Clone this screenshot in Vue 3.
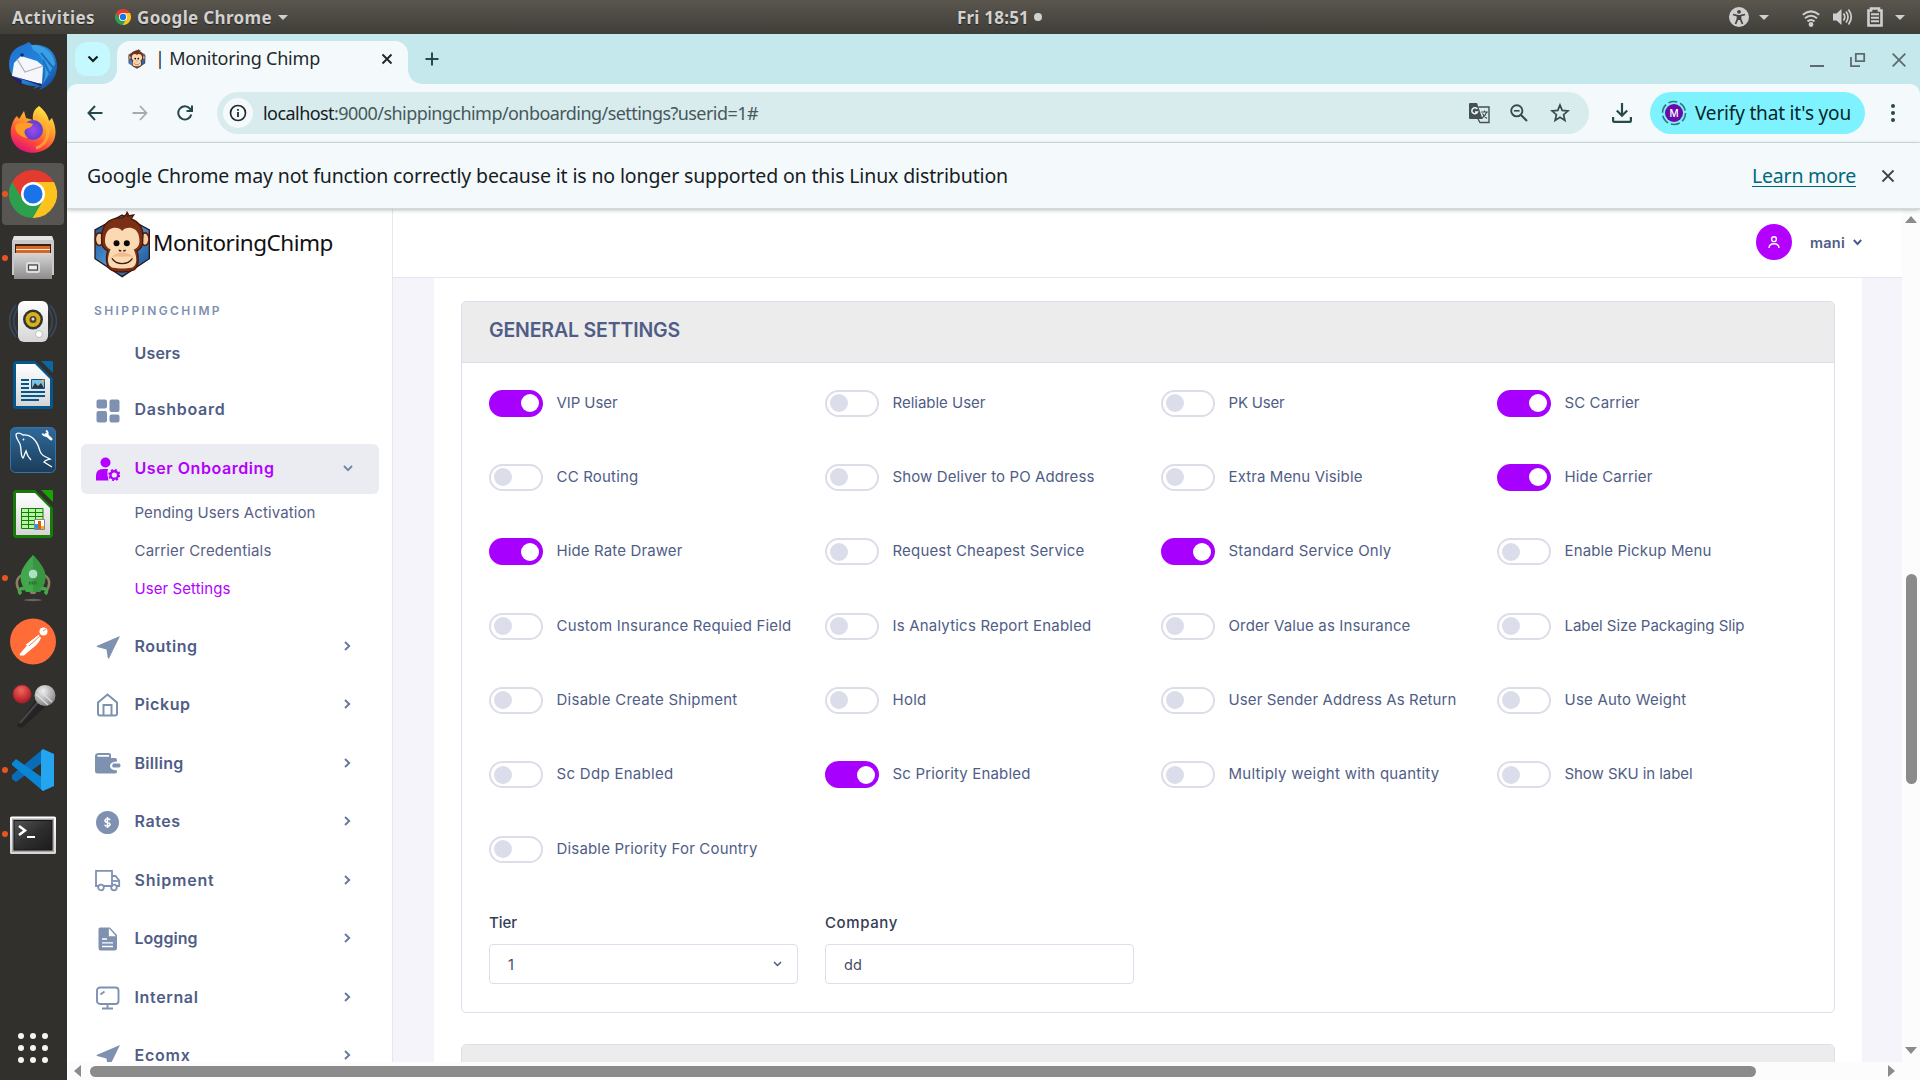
<script setup>
// Spreads a label's letters so that it takes the given width in pixels.
const vFit = {
  mounted(el, { value }) {
    const n = el.textContent.length
    if (!value || n < 2) return
    const box = el.getBoundingClientRect().width
    el.style.letterSpacing = ((value - box) / n).toFixed(3) + 'px'
  },
}

const launchers = [
  { id: 'mail' }, { id: 'firefox' }, { id: 'chrome', running: true, active: true },
  { id: 'files', running: true }, { id: 'music' }, { id: 'writer' }, { id: 'mysql' },
  { id: 'calc' }, { id: 'rocket', running: true }, { id: 'postman' }, { id: 'mic' },
  { id: 'code', running: true }, { id: 'terminal', running: true },
]

const subItems = [
  { name: 'Pending Users Activation', w: 181 },
  { name: 'Carrier Credentials', w: 137 },
  { name: 'User Settings', w: 96, current: true },
]

const menu = [
  { name: 'Routing', icon: 'nav', w: 63 },
  { name: 'Pickup', icon: 'home', w: 56 },
  { name: 'Billing', icon: 'wallet', w: 49 },
  { name: 'Rates', icon: 'dollar', w: 46 },
  { name: 'Shipment', icon: 'truck', w: 80 },
  { name: 'Logging', icon: 'file', w: 63 },
  { name: 'Internal', icon: 'monitor', w: 64 },
  { name: 'Ecomx', icon: 'nav', w: 56 },
]

const toggles = [
  ['VIP User', 61, true], ['Reliable User', 93], ['PK User', 56], ['SC Carrier', 75, true],
  ['CC Routing', 82], ['Show Deliver to PO Address', 202], ['Extra Menu Visible', 134], ['Hide Carrier', 88, true],
  ['Hide Rate Drawer', 126, true], ['Request Cheapest Service', 192], ['Standard Service Only', 163, true], ['Enable Pickup Menu', 147],
  ['Custom Insurance Requied Field', 235], ['Is Analytics Report Enabled', 199], ['Order Value as Insurance', 182], ['Label Size Packaging Slip', 180],
  ['Disable Create Shipment', 181], ['Hold', 34], ['User Sender Address As Return', 228], ['Use Auto Weight', 122],
  ['Sc Ddp Enabled', 117], ['Sc Priority Enabled', 138, true], ['Multiply weight with quantity', 211], ['Show SKU in label', 128],
  ['Disable Priority For Country', 201],
]
</script>

<template>
  <div class="desktop">
    <svg class="defs" width="0" height="0">
      <defs>
        <linearGradient id="gBlue" x1="0" y1="0" x2="1" y2="1"><stop offset="0" stop-color="#1f6fd0" /><stop offset=".55" stop-color="#2385dc" /><stop offset="1" stop-color="#153f96" /></linearGradient>
        <linearGradient id="gFox" x1=".8" y1="0" x2=".3" y2="1"><stop offset="0" stop-color="#fff14a" /><stop offset=".4" stop-color="#ffa02c" /><stop offset=".72" stop-color="#ff4a3b" /><stop offset="1" stop-color="#e0107c" /></linearGradient>
        <linearGradient id="gGrey" x1="0" y1="0" x2="0" y2="1"><stop offset="0" stop-color="#d6d6d6" /><stop offset="1" stop-color="#8d8d8d" /></linearGradient>
        <linearGradient id="gWhite" x1="0" y1="0" x2="0" y2="1"><stop offset="0" stop-color="#fff" /><stop offset="1" stop-color="#d5d5d5" /></linearGradient>
        <linearGradient id="gSql" x1="0" y1="0" x2="0" y2="1"><stop offset="0" stop-color="#2e6a9c" /><stop offset="1" stop-color="#1b3d58" /></linearGradient>
        <linearGradient id="gTerm" x1="0" y1="0" x2="1" y2="1"><stop offset="0" stop-color="#555" /><stop offset=".5" stop-color="#2e2e2e" /><stop offset="1" stop-color="#1c1c1c" /></linearGradient>
        <linearGradient id="gHex" x1="0" y1="0" x2="1" y2="1"><stop offset="0" stop-color="#154b8c" /><stop offset=".5" stop-color="#4a93d4" /><stop offset="1" stop-color="#154b8c" /></linearGradient>
        <radialGradient id="gRed" cx=".45" cy=".3" r=".7"><stop offset="0" stop-color="#f0675c" /><stop offset="1" stop-color="#b01524" /></radialGradient>
        <radialGradient id="gMic" cx=".4" cy=".3" r=".8"><stop offset="0" stop-color="#f1f1f1" /><stop offset="1" stop-color="#777" /></radialGradient>
        <radialGradient id="gPurple"><stop offset="0" stop-color="#a349ea" /><stop offset="1" stop-color="#5b3fd0" /></radialGradient>
      </defs>
      <symbol id="chrome-logo" viewBox="0 0 48 48">
        <path d="M24 24 3.200 12A24 24 0 0 1 44.800 12Z" fill="#e33b2e" />
        <path d="M24 24 44.800 12A24 24 0 0 1 24 48Z" fill="#fcc31e" />
        <path d="M24 24 24 48A24 24 0 0 1 3.200 12Z" fill="#2da04e" />
        <path d="M24 12H44.800A24 24 0 0 1 46 15L34 24Z" fill="#fcc31e" />
        <path d="M3.200 12 13.600 30 24 24 20 13Z" fill="#e33b2e" />
        <path d="M34.400 30 24 48 18 35Z" fill="#2da04e" />
        <path d="M34.400 30 24 48H26L38 30Z" fill="#fcc31e" />
        <circle cx="24" cy="24" r="12" fill="#fff" /><circle cx="24" cy="24" r="9.500" fill="#1a73e8" />
      </symbol>
      <symbol id="monkey" viewBox="10 16 172 202">
        <path d="M95 28 177 73V160L95 214 13 160V73Z" fill="url(#gHex)" stroke="#321412" stroke-width="4" />
        <ellipse cx="26" cy="101" rx="12" ry="19" fill="#f5cda4" stroke="#5a1d0c" stroke-width="5" />
        <ellipse cx="164" cy="101" rx="12" ry="19" fill="#f5cda4" stroke="#5a1d0c" stroke-width="5" />
        <path d="M95 36C99 32 108 31 110 20C114 25 114 29 112 31L130 28C126 34 124 36 122 40C148 50 161 72 157 102C158 122 153 128 140 137C146 156 145 186 130 194C112 202 78 202 62 194C46 186 45 156 51 137C38 128 32 122 33 102C30 72 44 46 72 39C80 36 88 36 95 36Z" fill="#7b3015" stroke="#4a1808" stroke-width="4" />
        <path d="M95 76C84 62 52 62 45 90C39 116 48 126 60 132C48 158 50 184 68 187C84 190 106 190 122 187C140 184 142 158 130 132C144 126 151 116 145 90C138 62 106 62 95 76Z" fill="#fbdab3" />
        <path d="M95 141C78 141 58 154 56 165C62 150 80 154 95 154S130 150 136 165C130 150 112 141 95 141Z" fill="#f3ba8d" />
        <circle cx="78" cy="113" r="9" fill="#0c0705" /><circle cx="109" cy="113" r="9" fill="#0c0705" />
        <path d="M84 132 93 134 92 138H86ZM107 132 98 134 98 138H104Z" fill="#3a2013" />
        <path d="M64 159C78 180 112 180 126 159" fill="none" stroke="#3f1a0c" stroke-width="4" />
      </symbol>
    </svg>

    <header class="topbar">
      <span class="tb-text activities"><span v-fit="83">Activities</span></span>
      <svg class="tb-chrome" width="16" height="16"><use href="#chrome-logo" /></svg>
      <span class="tb-text"><span v-fit="135">Google Chrome</span></span>
      <i class="caret caret-app"></i>
      <div class="clock"><span v-fit="72" class="tb-text">Fri 18:51</span><i></i></div>
      <div class="tray">
        <svg width="20" height="20" viewBox="0 0 20 20"><circle cx="10" cy="10" r="10" fill="#cfcfcf" /><circle cx="10" cy="4.800" r="1.900" fill="#45433d" /><path d="M4 7.500 8.500 8.600V12L6.500 17M16 7.500 11.500 8.600V12L13.500 17" fill="none" stroke="#45433d" stroke-width="1.700" /><path d="M8 8h4v5H8z" fill="#45433d" /></svg>
        <i class="caret c1"></i>
        <svg class="wifi" width="18" height="17" viewBox="0 0 18 17" fill="none" stroke="#cfcfcf" stroke-width="2"><path d="M.8 4.800Q9-2 17.200 4.800M3 8.300Q9 3.300 15 8.300M5.500 11.400Q9 8.600 12.500 11.400" /><circle cx="9" cy="14.500" r="1.400" fill="#cfcfcf" /></svg>
        <svg class="vol" width="20" height="18" viewBox="0 0 20 18"><path d="M0 5.500H3.500L8.500 1V17L3.500 12.500H0Z" fill="#cfcfcf" /><path d="M10.500 5.500Q13 9 10.500 12.500M13 3.500Q17 9 13 14.500M15.500 1.500Q21 9 15.500 16.500" fill="none" stroke="#cfcfcf" stroke-width="1.700" /></svg>
        <svg class="bat" width="16" height="20" viewBox="0 0 16 20"><path d="M1.500 3.500H4V1.500H12V3.500H14.500V18.500H1.500Z" fill="none" stroke="#cfcfcf" stroke-width="2.600" /><path d="M4 7.200H12M4 10.700H12M4 14.200H12" stroke="#cfcfcf" stroke-width="2" /></svg>
        <i class="caret c2"></i>
      </div>
    </header>

    <div class="below">
      <nav class="dock">
        <div v-for="l in launchers" :key="l.id" class="cell" :class="{ active: l.active }">
          <i v-if="l.running" class="dot"></i>
          <svg v-if="l.id === 'mail'" width="48" height="48" viewBox="0 0 48 48"><path d="M14 3 20 0 23 3C38 1 48 11 48 24 48 36 40 45 30 48L33 44 24 47 27 44C12 44 0 36 0 22 0 12 6 5 14 3Z" fill="url(#gBlue)" /><path d="M22 3C34 2 44 10 46 22L34 42C40 26 34 12 24 8Z" fill="#3aa0e4" /><path d="M32 11 46 28M34 18 42 34" stroke="#1c6fc0" stroke-width="2" /><path d="M5 21 12 14 28 19 34 24 33 42 28 41 3 34Z" fill="#f6f7fa" /><path d="M8 17 16 30 34 24" fill="none" stroke="#aab2c0" stroke-width="1.300" /><path d="M3 34 28 41 33 42 32 44 24 41Z" fill="#262169" /><path d="M3 34 13 38 12 43C8 41 5 38 3 34Z" fill="#262169" /><circle cx="13" cy="13" r="1.800" fill="#142f6c" /></svg>
          <svg v-else-if="l.id === 'firefox'" class="up1" width="48" height="48" viewBox="0 0 48 48"><path d="M30 1C35 5 39 10 40 16L43 13C48 24 48 34 41 41 32 50 15 50 7 41 0 34 0 22 6 13L8 11 10 14 15 6 17 13 24 15C23 9 25 4 30 1Z" fill="url(#gFox)" /><circle cx="24" cy="25" r="10" fill="url(#gPurple)" /><path d="M6 20C12 17 18 17 24 19L22 22 17 24C14 26 16 31 19 33 10 32 6 27 6 20Z" fill="#ff9c26" /><path d="M36 18C42 27 38 40 27 43" fill="none" stroke="#ffb52e" stroke-width="3" opacity=".7" /></svg>
          <svg v-else-if="l.id === 'chrome'" width="48" height="48"><use href="#chrome-logo" /></svg>
          <svg v-else-if="l.id === 'files'" class="up1" width="48" height="48" viewBox="0 0 48 48"><path d="M5 3H43L45 8V42H3V8Z" fill="#c9c9c9" /><path d="M5 3H43L44 7H4Z" fill="#e4e4e4" /><path d="M6 11H42V22H6Z" fill="#3a1f12" /><path d="M7 13H41V22H7Z" fill="#d96826" /><path d="M7 16.500H41" stroke="#fff0dc" stroke-width="1" /><path d="M5 20H43V46H5Z" fill="url(#gGrey)" /><rect x="18" y="30" width="12" height="9" rx="1.500" fill="#bbb" stroke="#ddd" stroke-width="2" /><rect x="19.500" y="32" width="9" height="5" fill="#eee" stroke="#444" stroke-width="1.200" /></svg>
          <svg v-else-if="l.id === 'music'" class="up1" width="48" height="48" viewBox="0 0 48 48"><path d="M7 8Q-6 24 7 40M10 9Q0 24 9 37M41 8Q54 24 41 40M38 9Q48 24 39 37" fill="none" stroke="#37475c" stroke-width="1.800" /><rect x="9" y="4" width="30" height="41" rx="6" fill="url(#gWhite)" /><circle cx="24" cy="22.500" r="10" fill="#33332f" /><circle cx="24" cy="22.500" r="7.500" fill="#d7b01c" /><circle cx="24" cy="22.500" r="3.500" fill="#4b473a" /><circle cx="24" cy="22" r="1.500" fill="#ddd" /><circle cx="30" cy="37" r="3.500" fill="#fff" stroke="#bbb" /></svg>
          <svg v-else-if="l.id === 'writer'" class="up1" width="48" height="48" viewBox="0 0 48 48"><path d="M6 0H26L44 18V46L42 48H6L4 46V2Z" fill="#05568c" /><path d="M32 0H43L44 1V12Z" fill="#0b66a4" /><path d="M7 3H26L41 18V45H7Z" fill="url(#gWhite)" /><path d="M12 19H20M12 23H20M12 27H20M12 31H36M12 35H36M12 39H30" stroke="#05568c" stroke-width="2" /><path d="M22.500 18.500H35.500V27.500H22.500Z" fill="#7cc0e8" stroke="#05568c" /><path d="M23 27 26 22 29 25 32 22 35 27Z" fill="#333" /><circle cx="34" cy="20" r="1.500" fill="#e6bb32" /></svg>
          <svg v-else-if="l.id === 'mysql'" width="48" height="48" viewBox="0 0 48 48"><rect x="1.500" y="1.500" width="45" height="45" rx="5" fill="url(#gSql)" stroke="#3874a4" /><path d="M22 34C19 31 18 29 17 25 15 29 15 31 14 32 11 29 13 24 11 18 9 14 7 12 7 9 7 6 12 7 14 9 21 8 27 13 30 22 31 26 32 29 37 31L41 33C37 34 36 34 35 36L43 41" fill="none" stroke="#fff" stroke-width="1.300" /><circle cx="14.500" cy="13.500" r=".9" fill="#fff" /><path d="M37 8.500 42 13" stroke="#fff" stroke-width="3" stroke-linecap="round" /><path d="M33.500 7.500A3.500 3.500 0 0 0 38 9.500 3.500 3.500 0 0 0 37 4.500" stroke="#fff" stroke-width="2" fill="none" /></svg>
          <svg v-else-if="l.id === 'calc'" width="48" height="48" viewBox="0 0 48 48"><path d="M6 0H26L44 18V46L42 48H6L4 46V2Z" fill="#177a09" /><path d="M32 0H43L44 1V12Z" fill="#18a303" /><path d="M7 3H26L41 18V45H7Z" fill="url(#gWhite)" /><path d="M12 18H34V38H12Z" fill="#b8f4a6" /><path d="M12 18.500H34V38.500H12.500V18M12 22.500H34M12 26.500H34M12 30.500H34M12 34.500H34M19.500 18V38M26.500 18V38" fill="none" stroke="#118003" /><path d="M25.500 29.500H35.500V39.500H25.500Z" fill="#fff" stroke="#888" /><path d="M26 34H29V39H26Z" fill="#1ba1e2" /><path d="M29 31H32V39H29Z" fill="#e8590c" /><path d="M32 36H35V39H32Z" fill="#f0b020" /></svg>
          <svg v-else-if="l.id === 'rocket'" width="48" height="48" viewBox="0 0 48 48"><path d="M13 21C5 25 8 34 11 37M35 21C43 25 40 34 37 37" fill="none" stroke="#8c8262" stroke-width="2.500" /><path d="M19 36H29L26 40H22Z" fill="#8c8262" /><path d="M24 1C38 16 40 24 31 38H17C8 24 10 16 24 1Z" fill="#43a84c" /><path d="M24 1C38 16 40 24 31 38H24Z" fill="#37963f" /><circle cx="24" cy="20" r="4.800" fill="#a7e5be" stroke="#5b8f73" /><path d="M20 29H28" stroke="#24702d" stroke-width="3" stroke-dasharray="1.500 1" /><path d="M16 35C11 33 9 37 12 40M32 35C37 33 39 37 36 40" fill="none" stroke="#43a84c" stroke-width="3.500" /><ellipse cx="24" cy="46" rx="9" ry="1.200" fill="#66645f" /></svg>
          <svg v-else-if="l.id === 'postman'" class="up1" width="48" height="48" viewBox="0 0 48 48"><circle cx="24" cy="24.500" r="23" fill="#ff6c37" /><circle cx="34.500" cy="14.500" r="4" fill="#fff" /><path d="M30 18 32 21C30 26 26 30 21 33L13 38 11 37 20 27Z" fill="#fff" /><path d="M30 18 17 28 20 27 12 36 11 38H15L23 31" fill="#fff" stroke="#fff" stroke-width="1" /><path d="M20 29 31 19M34 14 37 12" stroke="#ff6c37" stroke-width=".9" /></svg>
          <svg v-else-if="l.id === 'mic'" width="48" height="48" viewBox="0 0 48 48"><path d="M10 41 27 17 36 25 14 45C10 47 6 44 10 41Z" fill="#242424" /><path d="M11 41 29 20" stroke="#484848" stroke-width="2" /><circle cx="36" cy="13.500" r="10.500" fill="url(#gMic)" /><path d="M27 12 39 23M30 8 43 20" stroke="#dedede" stroke-width="1.300" /><circle cx="13" cy="12" r="9" fill="url(#gRed)" stroke="#9b2b30" /></svg>
          <svg v-else-if="l.id === 'code'" width="48" height="48" viewBox="0 0 48 48"><path d="M34 3V16L7 36 3 33V29Z" fill="#0a6cb8" /><path d="M3 17 7 13 34 32V45L3 19Z" fill="#0b86d2" /><path d="M34 3 45 8V40L34 45 32 43V5Z" fill="#25a5f0" /></svg>
          <svg v-else class="down3" width="48" height="48" viewBox="0 0 48 48"><rect x="1" y="3.500" width="46" height="37.500" rx="1.500" fill="url(#gWhite)" /><rect x="3" y="5.500" width="42" height="33.500" fill="#a5a5a5" /><rect x="5" y="7.500" width="38" height="29.500" fill="url(#gTerm)" stroke="#151515" /><path d="M10 13 16 17.500 10 22" fill="none" stroke="#fff" stroke-width="2.500" /><path d="M18 24H26" stroke="#fff" stroke-width="2" /></svg>
        </div>
        <div class="cell apps"><div class="dots"><i v-for="n in 9" :key="n"></i></div></div>
      </nav>

      <section class="window">
        <div class="tabstrip">
          <div class="tab-search"><svg width="12" height="8" viewBox="0 0 12 8"><path d="M1.500 1.500 6 6 10.500 1.500" fill="none" stroke="#10201f" stroke-width="2.200" /></svg></div>
          <div class="tab">
            <svg width="20" height="20" viewBox="0 0 20 20"><use href="#monkey" width="20" height="20" /></svg>
            <span class="tab-title"><span v-fit="165">| Monitoring Chimp</span></span>
            <svg class="tab-x" width="12" height="12" viewBox="0 0 12 12"><path d="M1.500 1.500 10.500 10.500M10.500 1.500 1.500 10.500" stroke="#222b2b" stroke-width="2" /></svg>
          </div>
          <svg class="plus" width="14" height="14" viewBox="0 0 14 14"><path d="M7 .5V13.500M.5 7H13.500" stroke="#27494b" stroke-width="2" /></svg>
          <div class="winctl">
            <svg width="14" height="16" viewBox="0 0 14 16"><path d="M0 14H14" stroke="#5d6b70" stroke-width="2" /></svg>
            <svg width="16" height="16" viewBox="0 0 16 16"><path d="M5.800 1.800H14.200V9.200H5.800ZM1 5V14.200H10" fill="none" stroke="#5d6b70" stroke-width="1.800" /></svg>
            <svg width="14" height="14" viewBox="0 0 14 14"><path d="M.7.700 13.300 13.300M13.300.700.700 13.300" stroke="#5d6b70" stroke-width="1.800" /></svg>
          </div>
        </div>

        <div class="toolbar">
          <svg class="t-back" width="16" height="16" viewBox="0 0 16 16" fill="none" stroke="#27494b" stroke-width="2"><path d="M8 1 1.500 8 8 15M1.500 8H15.500" /></svg>
          <svg class="t-fwd" width="16" height="16" viewBox="0 0 16 16" fill="none" stroke="#a3adb0" stroke-width="1.800"><path d="M8 1 14.500 8 8 15M14.500 8H.5" /></svg>
          <svg class="t-reload" width="16" height="16" viewBox="0 0 16 16" fill="none" stroke="#27494b" stroke-width="2"><path d="M14.300 9.500A6.600 6.600 0 1 1 12.800 3.500L14.500 5.500M15 .5V6H9.500" /></svg>
          <div class="omnibox">
            <span class="info"><svg width="18" height="18" viewBox="0 0 18 18"><circle cx="9" cy="9" r="7.500" fill="none" stroke="#222b2b" stroke-width="1.700" /><path d="M9 8V13M9 5V6.700" stroke="#222b2b" stroke-width="1.800" /></svg></span>
            <span class="url"><span v-fit="495"><b>localhost</b>:9000/shippingchimp/onboarding/settings?userid=1#</span></span>
            <svg class="o-tr" width="22" height="22" viewBox="0 0 22 22"><path d="M2 1H9L14.500 17H2Q1 17 1 16V2Q1 1 2 1Z" fill="#445052" /><path d="M10.500 5H21V20.500H12L10 17" fill="none" stroke="#445052" stroke-width="1.400" /><path d="M13 10H20M16.500 8.500V10M18.800 10Q17.500 14 13.500 16.500M14.500 11.500Q16.500 15 19 16.500" fill="none" stroke="#445052" stroke-width="1.200" /><path d="M9.300 7A3 3 0 1 0 9.600 10H7" fill="none" stroke="#eef6f7" stroke-width="1.500" /></svg>
            <svg class="o-zoom" width="18" height="18" viewBox="0 0 18 18" fill="none" stroke="#39484a"><circle cx="6.800" cy="6.800" r="5.600" stroke-width="1.900" /><path d="M11 11 17 17" stroke-width="2.200" /><path d="M4 6.800H9.600" stroke-width="1.600" /></svg>
            <svg class="o-star" width="20" height="20" viewBox="0 0 20 20"><path d="M10 2 12.200 7.400 18 7.900 13.600 11.700 14.900 17.400 10 14.300 5.100 17.400 6.400 11.700 2 7.900 7.800 7.400Z" fill="none" stroke="#39484a" stroke-width="1.700" /></svg>
          </div>
          <svg class="t-dl" width="20" height="20" viewBox="0 0 20 20" fill="none" stroke="#27494b" stroke-width="2.200"><path d="M10 0V12.500M4.800 7.500 10 12.700 15.200 7.500M1.100 14V17.500Q1.100 18.900 2.500 18.900H17.500Q18.900 18.900 18.900 17.500V14" /></svg>
          <div class="verify">
            <span class="ring"><svg width="26" height="26" viewBox="0 0 26 26"><circle cx="13" cy="13" r="11.500" fill="none" stroke="#33757d" stroke-width="1.600" stroke-dasharray="9 3.040" /><circle cx="13" cy="13" r="9" fill="#6a0aa8" /></svg><em>M</em></span>
            <span v-fit="156">Verify that it's you</span>
          </div>
          <div class="kebab"><i></i><i></i><i></i></div>
        </div>

        <div class="infobar">
          <span v-fit="921">Google Chrome may not function correctly because it is no longer supported on this Linux distribution</span>
          <a><span v-fit="104">Learn more</span></a>
          <svg width="14" height="14" viewBox="0 0 14 14"><path d="M1.500 1.500 12.500 12.500M12.500 1.500 1.500 12.500" stroke="#39484a" stroke-width="1.800" /></svg>
        </div>

        <div class="view">
          <div class="page">
            <aside class="sidebar">
              <div class="brand"><svg width="57" height="67"><use href="#monkey" /></svg><span v-fit="180">MonitoringChimp</span></div>
              <div class="caption"><span v-fit="128">SHIPPINGCHIMP</span></div>
              <div class="item users"><span v-fit="46">Users</span></div>
              <div class="item">
                <svg class="ico" width="24" height="24" viewBox="0 0 24 24" fill="#7e91b1"><rect x=".5" y=".5" width="10.500" height="9" rx="2" /><rect x="13.500" y=".5" width="10" height="12.500" rx="2" /><rect x=".5" y="12" width="10.500" height="11.500" rx="2" /><rect x="13.500" y="15.500" width="10" height="8" rx="2" /></svg>
                <span v-fit="91">Dashboard</span>
              </div>
              <div class="item open">
                <svg class="ico" width="24" height="24" viewBox="0 0 24 24" fill="#b300ff"><circle cx="9.500" cy="5.500" r="5" /><path d="M0 23.500V19Q0 12 7 12H12Q11 15 11.500 18L12.500 23.500Z" /><circle cx="18.300" cy="18" r="3.800" fill="none" stroke="#b300ff" stroke-width="2.400" /><circle cx="18.300" cy="18" r="5.300" fill="none" stroke="#b300ff" stroke-width="1.600" stroke-dasharray="2.080 2.080" /></svg>
                <span v-fit="140">User Onboarding</span>
                <svg class="arrow" width="10" height="7" viewBox="0 0 10 7"><path d="M1 1 5 5.200 9 1" fill="none" stroke="#7286a9" stroke-width="1.900" /></svg>
              </div>
              <div class="subs">
                <div v-for="s in subItems" :key="s.name" :class="{ current: s.current }"><span v-fit="s.w">{{ s.name }}</span></div>
              </div>
              <div v-for="m in menu" :key="m.name" class="item">
                <svg class="ico wide" width="26" height="24" viewBox="-1 0 26 24" fill="none" stroke="#7e91b1" stroke-width="2">
                  <path v-if="m.icon === 'nav'" d="M24 1 13 23.500Q12.300 24 11.800 23L10.500 14.500 1.200 12Q0 11.500 1.200 10.800Z" fill="#7e91b1" stroke="none" />
                  <path v-else-if="m.icon === 'home'" d="M2 9.500 11.500 1.500 21 9.500V20.500Q21 22.500 19 22.500H4Q2 22.500 2 20.500ZM7.500 22.500V12H15.500V22.500" />
                  <g v-else-if="m.icon === 'wallet'" stroke="none" fill="#7e91b1"><path fill-rule="evenodd" d="M3 1H13Q15 1 15 3V6H19Q21 6 21 8V9.500Q14 10 14 14T21 18.500V19.500Q21 21.500 19 21.500H2Q-1 21.500-1 19V4Q-1 1 3 1ZM1.500 3V4.800H13V3Z" /><path d="M17 11.500H23Q24.500 11.500 24.500 13.500T23 15.500H17Q15.500 13.500 17 11.500Z" /></g>
                  <g v-else-if="m.icon === 'dollar'"><circle cx="11.500" cy="12.500" r="11.500" fill="#7e91b1" stroke="none" /><path d="M14.200 10.200Q13.500 8.800 11.500 8.800T8.900 10.600Q9 12 11.500 12.500T14.200 14.500Q13.800 16.200 11.500 16.200T8.700 14.700M11.500 7V18" stroke="#fff" stroke-width="1.500" /></g>
                  <g v-else-if="m.icon === 'truck'" stroke-width="1.800"><path d="M3 17H0V1.800H16V17H7.500M16 7H19.500L23.200 11.500V17H21M14.500 17H16" /><circle cx="5" cy="18.500" r="2.800" /><circle cx="18" cy="18.500" r="2.800" /><path d="M17 12H23" /></g>
                  <g v-else-if="m.icon === 'file'"><path d="M4 .5H14L21 8V21Q21 23.500 18.500 23.500H4.500Q2.500 23.500 2.500 21V2.500Q2.500.500 4 .5Z" fill="#7e91b1" stroke="none" /><path d="M13.500 3V8.500H18.500ZM6 12H11M6 15.800H17M6 19.500H17" stroke="#fff" stroke-width="1.300" fill="#fff" /></g>
                  <g v-else stroke-width="1.900"><rect x="1" y="1.500" width="21.500" height="16.500" rx="3" /><path d="M11.500 18V22M6 22.500H17M4.500 8.500 8.500 5.500" /></g>
                </svg>
                <span v-fit="m.w">{{ m.name }}</span>
                <svg class="arrow right" width="7" height="10" viewBox="0 0 7 10"><path d="M1 1 5.200 5 1 9" fill="none" stroke="#64799c" stroke-width="1.900" /></svg>
              </div>
            </aside>

            <main class="content">
              <div class="appbar">
                <span class="avatar"><svg width="12" height="13" viewBox="0 0 12 13" fill="none" stroke="#fff" stroke-width="1.400"><circle cx="6" cy="3.200" r="2.400" /><path d="M1 12Q1.200 7.800 6 7.800T11 12" /></svg></span>
                <span v-fit="35" class="mani">mani</span>
                <svg width="9" height="7" viewBox="0 0 9 7"><path d="M.8 1 4.500 5 8.200 1" fill="none" stroke="#4a5a85" stroke-width="1.900" /></svg>
              </div>
              <div class="body">
                <div class="card">
                  <section class="panel">
                    <h2><span v-fit="191">GENERAL SETTINGS</span></h2>
                    <div class="grid">
                      <label v-for="t in toggles" :key="t[0]"><i class="switch" :class="{ on: t[2] }"></i><span v-fit="t[1]">{{ t[0] }}</span></label>
                    </div>
                    <div class="fields">
                      <div class="field"><span class="name"><span v-fit="28">Tier</span></span><div class="input"><span>1</span><svg width="9" height="6" viewBox="0 0 9 6"><path d="M1 1 4.500 4.500 8 1" fill="none" stroke="#4a5a85" stroke-width="1.500" /></svg></div></div>
                      <div class="field"><span class="name"><span v-fit="73">Company</span></span><div class="input"><span>dd</span></div></div>
                    </div>
                  </section>
                  <section class="panel next"><h2></h2></section>
                </div>
              </div>
            </main>
          </div>
          <div class="vbar"><i class="up"></i><i class="thumb"></i><i class="down"></i></div>
          <div class="hbar"><i class="left"></i><i class="thumb"></i><i class="rt"></i></div>
        </div>
      </section>
    </div>
  </div>
</template>

<style>
body { margin: 0; overflow: hidden; }
</style>

<style scoped>
* { box-sizing: border-box; }
.desktop { width: 1920px; height: 1080px; overflow: hidden; display: flex; flex-direction: column; font-family: "Noto Sans", "Open Sans", sans-serif; white-space: nowrap; }
.defs { position: absolute; }
svg { display: block; flex: none; }
i, em { font-style: normal; display: block; }
.topbar { position: relative; height: 34px; flex: none; display: flex; align-items: center; background: linear-gradient(#5a564e, #403e39); padding-left: 12px; }
.tb-text { font-size: 17px; font-weight: 700; color: #d2d1cf; text-shadow: 0 1px 1px #222; }
.activities { width: 103px; }
.tb-chrome { margin-right: 6px; }
.caret { border: 5px solid transparent; border-top-color: #cfcfcf; border-bottom: 0; }
.caret-app { margin-left: 6px; }
.clock { position: absolute; left: 957px; top: 0; height: 34px; display: flex; align-items: center; }
.clock i { width: 8px; height: 8px; border-radius: 50%; background: #d2d1cf; margin-left: 5px; }
.tray { margin-left: auto; display: flex; align-items: center; padding-right: 15px; }
.c1 { margin: 0 33px 0 10px; }
.wifi { margin-right: 13px; margin-top: 2px; }
.vol { margin-right: 14px; }
.c2 { margin-left: 12px; }
.below { flex: 1; display: flex; min-height: 0; }
.dock { width: 67px; flex: none; background: #32302c; display: flex; flex-direction: column; }
.cell { position: relative; height: 64px; flex: none; display: flex; align-items: center; justify-content: center; padding-right: 1px; }
.cell.active::before { content: ""; position: absolute; left: 2px; top: 1px; width: 62px; height: 62px; border-radius: 4px; background: #585652; }
.cell svg { position: relative; }
.up1 { margin-top: -2px; }
.down3 { margin-top: 6px; }
.dot { position: absolute; left: 2px; top: 29px; width: 6px; height: 6px; border-radius: 50%; background: #e95420; z-index: 1; }
.apps { margin-top: auto; }
.dots { display: grid; grid-template-columns: repeat(3, 6px); gap: 6px; }
.dots i { width: 6px; height: 6px; border-radius: 50%; background: #f4f4f4; }
.window { flex: 1; display: flex; flex-direction: column; min-width: 0; background: #c4e8eb; }
.tabstrip { height: 50px; flex: none; display: flex; align-items: center; padding: 7px 14px 0 8px; }
.tab-search { width: 35px; height: 34px; border-radius: 12px; background: #c6f8ff; display: flex; align-items: center; justify-content: center; margin: -8px 7px 0 0; }
.tab { position: relative; width: 291px; height: 43px; background: #f4f9fc; border-radius: 13px 13px 0 0; display: flex; align-items: center; padding: 0 15px 8px 10px; }
.tab::before, .tab::after { content: ""; position: absolute; bottom: 0; width: 14px; height: 14px; }
.tab::before { left: -14px; background: radial-gradient(circle at 0 0, transparent 13.500px, #f4f9fc 14px); }
.tab::after { right: -14px; background: radial-gradient(circle at 100% 0, transparent 13.500px, #f4f9fc 14px); }
.tab-title { font-size: 18px; color: #1f2a2b; margin: -2px 0 0 8px; }
.tab-x { margin-left: auto; }
.plus { margin: -8px 0 0 17px; }
.winctl { margin: -6px 0 0 auto; display: flex; align-items: center; gap: 26px; }
.toolbar { height: 59px; flex: none; background: #f4f9fc; border-bottom: 1px solid #d3e4e7; border-radius: 10px 10px 0 0; display: flex; align-items: center; padding: 0 25px 0 20px; }
.t-back, .t-fwd { margin-right: 29px; }
.t-reload { margin-right: 24px; }
.omnibox { width: 1372px; height: 42px; border-radius: 21px; background: #d8ecee; display: flex; align-items: center; padding: 0 19px 0 6px; }
.info { width: 30px; height: 30px; border-radius: 50%; background: #f4f9fc; display: flex; align-items: center; justify-content: center; margin-right: 10px; }
.url { font-size: 18px; color: #48585b; }
.url b { font-weight: 400; color: #16201f; }
.o-tr { margin-left: auto; }
.o-zoom { margin-left: 20px; }
.o-star { margin-left: 22px; }
.t-dl { margin-left: 23px; }
.verify { width: 215px; height: 42px; margin-left: 18px; border-radius: 21px; background: #7ef3ff; display: flex; align-items: center; padding-left: 11px; gap: 8px; font-size: 19px; color: #082629; }
.ring { position: relative; }
.ring em { position: absolute; inset: 0; text-align: center; font: 500 10px/26px Inter, sans-serif; color: #fff; }
.kebab { margin-left: auto; display: grid; gap: 3px; }
.kebab i { width: 4px; height: 4px; border-radius: 50%; background: #27494b; }
.infobar { position: relative; z-index: 2; height: 66px; flex: none; background: #f4f9fc; border-bottom: 1px solid #ccdcdf; box-shadow: 0 1px 4px rgba(0, 0, 0, .28); display: flex; align-items: center; padding: 0 25px 0 20px; font-size: 19.500px; color: #16201f; }
.infobar a { margin: 2px 25px 0 auto; color: #00687a; border-bottom: 1px solid #00687a; line-height: 20px; }
.view { flex: 1; min-height: 0; display: grid; grid-template: 853px 18px / 1835px 18px; background: #fcfcfc; }
.page { display: flex; overflow: hidden; font-family: Inter, "Open Sans", sans-serif; background: #f4f4fa; }
.sidebar { width: 326px; flex: none; background: #fff; border-right: 1px solid #e6e8f1; padding: 0 13px 0 14px; }
.brand { height: 80px; display: flex; padding: 2px 0 0 13px; font: 22.500px "Noto Sans", sans-serif; color: #111; }
.brand span { margin: 16px 0 0 2px; }
.caption { height: 42px; display: flex; align-items: center; padding-left: 13px; font-size: 12px; font-weight: 600; color: #7e91b1; }
.item { position: relative; height: 50px; margin-bottom: 8.500px; border-radius: 6px; display: flex; align-items: center; padding: 0 25px 2px 53.500px; font-size: 16px; font-weight: 600; color: #505d86; }
.users { height: 43px; margin-bottom: 11px; padding-bottom: 0; }
.ico { position: absolute; left: 14.500px; top: 13.500px; }
.ico.wide { left: 14px; top: 13px; }
.open { background: #ebecf2; color: #b300ff; margin-bottom: 0; }
.arrow { margin-left: auto; }
.open .arrow { margin-top: 2px; margin-right: 1px; }
.right { margin-right: 3px; }
.subs { padding-left: 53.500px; margin-bottom: 14.200px; font-size: 15px; color: #566087; }
.subs div { height: 38px; line-height: 37px; }
.subs .current { color: #b300ff; }
.content { flex: 1; display: flex; flex-direction: column; min-width: 0; }
.appbar { height: 69px; flex: none; background: #fff; border-bottom: 1px solid #e1e6f2; display: flex; align-items: center; justify-content: flex-end; padding: 0 40px 2px 0; }
.avatar { width: 36px; height: 36px; border-radius: 50%; background: #b300ff; display: flex; align-items: center; justify-content: center; margin-right: 18px; }
.mani { font-size: 14.500px; font-weight: 600; color: #505d86; margin-right: 8px; }
.body { flex: 1; padding: 0 40px 0 41px; overflow: hidden; }
.card { background: #fff; padding: 23px 27px 0; height: 800px; }
.panel { height: 712px; border: 1px solid #dcdeed; border-radius: 5px; overflow: hidden; }
.panel h2 { margin: 0; height: 61px; background: #ececec; border-bottom: 1px solid #dcdeed; display: flex; align-items: center; padding: 0 27px 5px; font-size: 19.500px; font-weight: 600; color: #505d86; }
.next { margin-top: 31px; }
.grid { display: grid; grid-template-columns: repeat(4, 336px); grid-auto-rows: 74.330px; padding: 3px 0 0 27px; }
.grid label { display: flex; align-items: center; font-size: 15px; color: #505d86; }
.grid label > span { margin-top: -2px; }
.switch { width: 54px; height: 27px; flex: none; border-radius: 14px; border: 2px solid #dcddea; background: #fff; margin-right: 13.500px; padding: 2.500px; }
.switch::after { content: ""; display: block; width: 18px; height: 18px; border-radius: 50%; background: #dcddea; }
.switch.on { background: #a800ff; border-color: #a800ff; }
.switch.on::after { background: #fff; margin-left: 27px; }
.fields { display: flex; gap: 27px; padding: 26px 0 0 27px; }
.field { width: 309px; }
.name { display: block; height: 31px; line-height: 19px; font-size: 15px; font-weight: 500; color: #343c55; margin-top: 1px; }
.input { height: 40px; border: 1px solid #dcdeed; border-radius: 4px; display: flex; align-items: center; justify-content: space-between; padding: 0 15px 0 18px; font-size: 14.500px; color: #454d66; }
.vbar, .hbar { background: #fcfcfc; display: flex; }
.vbar { flex-direction: column; align-items: center; }
.up, .down, .left, .rt { border: 6.500px solid transparent; }
.up { border-bottom: 7px solid #8b8b8b; border-top: 0; margin-top: 7px; }
.vbar .thumb { width: 11px; height: 210px; border-radius: 6px; background: #8b8b8b; margin-top: 351px; }
.down { border-top: 7px solid #8b8b8b; border-bottom: 0; margin-top: auto; margin-bottom: 8px; }
.hbar { align-items: center; grid-column: 1 / 3; }
.left { border-right: 7px solid #8b8b8b; border-left: 0; margin-left: 7px; }
.hbar .thumb { width: 1666px; height: 11px; border-radius: 6px; background: #8b8b8b; margin-left: 9px; }
.rt { border-left: 7px solid #8b8b8b; border-right: 0; margin-left: auto; margin-right: 25px; }
</style>
